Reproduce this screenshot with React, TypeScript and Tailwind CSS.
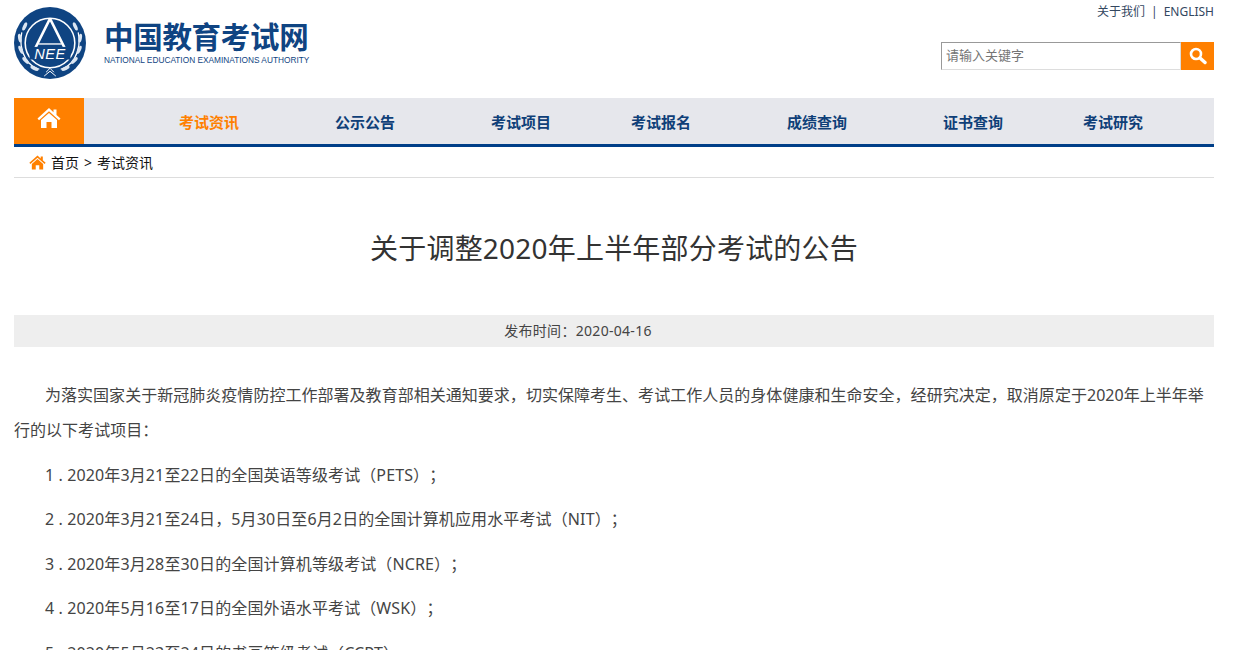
const navItems = [
  { label: "考试资讯", width: "w-[156px]", active: true },
  { label: "公示公告", width: "w-[156px]" },
  { label: "考试项目", width: "w-[140px]" },
  { label: "考试报名", width: "w-[156px]" },
  { label: "成绩查询", width: "w-[156px]" },
  { label: "证书查询", width: "w-[140px]" },
  { label: "考试研究", width: "w-[130px]" },
];

const items = [
  "1 . 2020年3月21至22日的全国英语等级考试（PETS）；",
  "2 . 2020年3月21至24日，5月30日至6月2日的全国计算机应用水平考试（NIT）；",
  "3 . 2020年3月28至30日的全国计算机等级考试（NCRE）；",
  "4 . 2020年5月16至17日的全国外语水平考试（WSK）；",
  "5 . 2020年5月23至24日的书画等级考试（CCPT）。",
];

function Logo() {
  return (
    <svg width="72" height="72" viewBox="0 0 74 74" className="shrink-0">
      <circle cx="37" cy="37" r="37" fill="#0f4482" />
      <circle cx="37" cy="37" r="25.5" fill="none" stroke="#fff" strokeWidth="1.6" />
      <path d="M37 12 L17 52 M37 12 L57 52" stroke="#fff" strokeWidth="2.6" fill="none" />
      <path d="M25 38h24" stroke="#fff" strokeWidth="1.4" />
      <rect x="16" y="41" width="42" height="13" fill="#0f4482" />
      <text x="37" y="53" textAnchor="middle" fill="#fff" fontSize="15" fontStyle="italic" fontFamily="Liberation Sans" letterSpacing="0.5">NEE</text>
      <path d="M8 26c-2 8-1 19 4 27 3 5 8 9 14 11M66 26c2 8 1 19-4 27-3 5-8 9-14 11" stroke="#fff" strokeWidth="1.3" fill="none" />
      <g fill="#dce6f2">
        <ellipse cx="11" cy="20" rx="1.8" ry="4.5" transform="rotate(25 11 20)" />
        <ellipse cx="6" cy="32" rx="1.8" ry="4.5" transform="rotate(-10 6 32)" />
        <ellipse cx="7" cy="44" rx="1.8" ry="4.5" transform="rotate(-25 7 44)" />
        <ellipse cx="12" cy="55" rx="1.8" ry="4.5" transform="rotate(-45 12 55)" />
        <ellipse cx="21" cy="63" rx="1.8" ry="4.5" transform="rotate(-65 21 63)" />
        <ellipse cx="63" cy="20" rx="1.8" ry="4.5" transform="rotate(-25 63 20)" />
        <ellipse cx="68" cy="32" rx="1.8" ry="4.5" transform="rotate(10 68 32)" />
        <ellipse cx="67" cy="44" rx="1.8" ry="4.5" transform="rotate(25 67 44)" />
        <ellipse cx="62" cy="55" rx="1.8" ry="4.5" transform="rotate(45 62 55)" />
        <ellipse cx="53" cy="63" rx="1.8" ry="4.5" transform="rotate(65 53 63)" />
      </g>
      <path d="M33 67l4-4 4 4M31 71l6-5 6 5" stroke="#fff" strokeWidth="1" fill="none" />
    </svg>
  );
}

function HomeIcon({ size, color }: { size: number; color: string }) {
  return (
    <svg width={size} height={size} viewBox="0 0 24 24" fill={color}>
      <path d="M12 2 0.5 12.5 2 14.2 12 5.2l10 9 1.5-1.7-4-3.6V3.5h-3v2.8z" />
      <path d="M12 7 4 14v8h5.5v-6h5v6H20v-8z" />
    </svg>
  );
}

function SearchIcon() {
  return (
    <svg width="18" height="18" viewBox="0 0 18 18" fill="none">
      <circle cx="7" cy="7" r="5" stroke="#fff" strokeWidth="2.6" />
      <path d="M11 11l5 4.5" stroke="#fff" strokeWidth="3.4" strokeLinecap="round" />
    </svg>
  );
}

export default function App() {
  return (
    <div className="h-screen overflow-hidden bg-white font-['Noto_Sans','Noto_Sans_CJK_SC',sans-serif] [text-spacing-trim:space-all]">
      <div className="ml-[14px] w-[1200px]">
        <header className="flex h-[98px] justify-between">
          <div className="flex items-start pt-[7px]">
            <Logo />
            <div className="ml-[18px] pt-[13px] text-[#0f4482]">
              <div className="text-[29.5px] leading-[34px] font-bold tracking-[-0.3px] whitespace-nowrap">中国教育考试网</div>
              <div className="font-['Liberation_Sans',sans-serif] text-[8.3px] leading-[12px] whitespace-nowrap">NATIONAL EDUCATION EXAMINATIONS AUTHORITY</div>
            </div>
          </div>
          <div className="flex flex-col items-end">
            <div className="mt-[4px] text-[12px] leading-[16px] text-[#33475f]">
              关于我们<span className="mx-[6px]">|</span><span>ENGLISH</span>
            </div>
            <div className="mt-[22px] flex h-[28px] w-[273px]">
              <div className="flex flex-1 items-center border border-t-[#999] border-l-[#999] border-r-[#ddd] border-b-[#ddd] pl-[4px] text-[13px] text-[#757575]">
                请输入关键字
              </div>
              <div className="flex w-[33px] items-center justify-center bg-[#ff8000]">
                <SearchIcon />
              </div>
            </div>
          </div>
        </header>

        <nav className="flex h-[49px] border-b-[3px] border-[#003f88] bg-[#e6e7ec]">
          <div className="flex w-[70px] items-start justify-center bg-[#ff8000] pt-[8px]">
            <HomeIcon size={24} color="#fff" />
          </div>
          <div className="flex flex-1 items-center pt-[2px] pl-[95px] text-[15px] font-bold text-[#0f3f78]">
            {navItems.map((item) => (
              <a key={item.label} className={`${item.width} ${item.active ? "text-[#ff8000]" : ""}`}>
                {item.label}
              </a>
            ))}
          </div>
        </nav>

        <div className="flex h-[31px] items-center border-b border-[#ddd] pl-[15px] text-[14px] text-[#111]">
          <HomeIcon size={17} color="#ff8000" />
          <span className="ml-[5px]">首页</span>
          <span className="mx-[5px]">&gt;</span>
          <span>考试资讯</span>
        </div>

        <h1 className="mt-[52px] text-center text-[28px] leading-[36px] tracking-[0.2px] text-[#333]">关于调整2020年上半年部分考试的公告</h1>

        <div className="mt-[49px] h-[32px] bg-[#eee] pr-[72px] text-center text-[14px] leading-[32px] tracking-[0.3px] text-[#444]">发布时间：2020-04-16</div>

        <article className="mt-[31px] text-[16px] leading-[35px] text-[#444]">
          <p className="indent-[31px] tracking-[0.03px]">为落实国家关于新冠肺炎疫情防控工作部署及教育部相关通知要求，切实保障考生、考试工作人员的身体健康和生命安全，经研究决定，取消原定于2020年上半年举行的以下考试项目：</p>
          {items.map((text) => (
            <p key={text} className="mt-[9.5px] pl-[31px] tracking-[0.12px]">{text}</p>
          ))}
        </article>
      </div>
    </div>
  );
}
